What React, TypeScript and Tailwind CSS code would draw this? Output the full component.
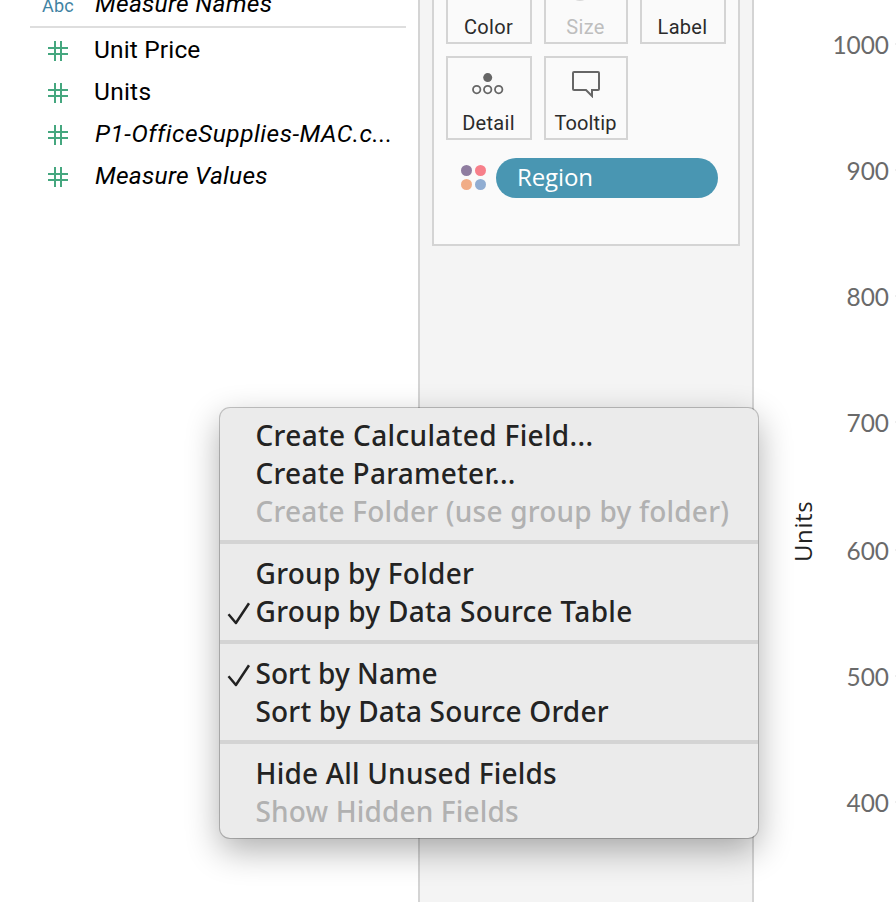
import React from "react";
import { clsx } from "clsx";

const measures = [
  { name: "Unit Price", italic: false, tracking: "tracking-[0.15px]" },
  { name: "Units", italic: false, tracking: "tracking-[0.25px]" },
  { name: "P1-OfficeSupplies-MAC.c...", italic: true, tracking: "tracking-[0.5px]" },
  { name: "Measure Values", italic: true, tracking: "tracking-[0.25px]" },
];

type Item = { label: string; tracking: string; checked?: boolean; disabled?: boolean };

const menu: Item[][] = [
  [
    { label: "Create Calculated Field...", tracking: "tracking-[0.34px]" },
    { label: "Create Parameter...", tracking: "tracking-[0.26px]" },
    { label: "Create Folder (use group by folder)", tracking: "tracking-[0.22px]", disabled: true },
  ],
  [
    { label: "Group by Folder", tracking: "tracking-[0.27px]" },
    { label: "Group by Data Source Table", tracking: "tracking-[0.3px]", checked: true },
  ],
  [
    { label: "Sort by Name", tracking: "tracking-[0.05px]", checked: true },
    { label: "Sort by Data Source Order", tracking: "tracking-[0.18px]" },
  ],
  [
    { label: "Hide All Unused Fields", tracking: "tracking-[0.2px]" },
    { label: "Show Hidden Fields", tracking: "tracking-[0.15px]", disabled: true },
  ],
];

const ticks = [1000, 900, 800, 700, 600, 500, 400];

function HashIcon() {
  return (
    <svg width="20" height="20" viewBox="0 0 20 20" className="shrink-0" shapeRendering="crispEdges">
      <path d="M7 0v20M13 0v20M0 7h20M0 13h20" stroke="#45a77f" strokeWidth="2" />
    </svg>
  );
}

function Check() {
  return (
    <svg width="24" height="24" viewBox="0 0 24 24" fill="none">
      <path d="M1.5 12.2 8.9 21 22 1.2" stroke="#222" strokeWidth="2.5" strokeLinejoin="round" />
    </svg>
  );
}

type CardProps = { label: string; width: string; tracking?: string; disabled?: boolean; children?: React.ReactNode };

function Card({ label, width, tracking = "tracking-[0.3px]", disabled, children }: CardProps) {
  return (
    <div
      className={clsx(
        "flex h-[84px] flex-col items-center justify-between border-2 border-[#d4d4d4] text-[20px]",
        width,
        disabled ? "text-[#bebebe]" : "text-[#2b2b2b]",
      )}
    >
      <div className="flex h-[50px] items-center pt-0.5">{children}</div>
      <div className={clsx("h-[30px] pr-px leading-[30px]", tracking)}>{label}</div>
    </div>
  );
}

function DataPane() {
  return (
    <div className="w-[418px] shrink-0 text-[24.5px] text-black">
      <div className="-mt-[17px] flex h-[42px]">
        <span className="w-[95px] pl-[42px] text-[18px] leading-[45px] tracking-[0.2px] text-[#3f83a3]">Abc</span>
        <span className="leading-[42px] tracking-[0.27px] italic">Measure Names</span>
      </div>
      <div className="mt-px ml-[30px] h-0.5 w-[376px] bg-[#dedede]" />
      <div className="mt-px">
        {measures.map((m) => (
          <div key={m.name} className="flex h-[42px] items-center">
            <div className="w-[94px] pt-px pl-12">
              <HashIcon />
            </div>
            <span className={clsx("leading-[42px] whitespace-nowrap", m.tracking, m.italic && "pl-px italic")}>{m.name}</span>
          </div>
        ))}
      </div>
    </div>
  );
}

function MarksPane() {
  return (
    <div className="w-[336px] shrink-0 border-x-2 border-[#d4d4d4] bg-[#f4f4f4] px-3">
      <div className="h-[246px] w-[308px] overflow-hidden border-2 border-t-0 border-[#d4d4d4] bg-[#fafafa] px-3">
        <div className="-mt-10 flex gap-3">
          <Card label="Color" width="w-[86px]" />
          <Card label="Size" width="w-[84px]" disabled>
            <div className="mt-1.5 mr-3 h-5 w-5 rounded-full border-2 border-[#d8d8d8]" />
          </Card>
          <Card label="Label" width="w-[86px]" />
        </div>
        <div className="mt-3 flex gap-3">
          <Card label="Detail" width="w-[86px]">
            <svg width="32" height="22" viewBox="0 0 32 22" fill="none" stroke="#666" strokeWidth="1.8" className="mr-0.5">
              <circle cx="15.7" cy="4.6" r="4.5" fill="#666" stroke="none" />
              <circle cx="4.7" cy="16.6" r="3.7" />
              <circle cx="15.7" cy="16.6" r="3.7" />
              <circle cx="26.7" cy="16.6" r="3.7" />
            </svg>
          </Card>
          <Card label="Tooltip" width="w-[84px]" tracking="tracking-[0.1px]">
            <svg width="28" height="27" viewBox="0 0 28 27" fill="none">
              <path d="M2 1H26Q27 1 27 2V18Q27 19 26 19H20V25L14 19H2Q1 19 1 18V2Q1 1 2 1Z" stroke="#666" strokeWidth="2" />
            </svg>
          </Card>
        </div>
        <div className="mt-[18px] flex items-center pl-[15px]">
          <div className="mb-px grid grid-cols-2 gap-[3px]">
            <i className="h-[11px] w-[11px] rounded-full bg-[#8f7da0]" />
            <i className="h-[11px] w-[11px] rounded-full bg-[#f77f8a]" />
            <i className="h-[11px] w-[11px] rounded-full bg-[#f1ad87]" />
            <i className="h-[11px] w-[11px] rounded-full bg-[#90add2]" />
          </div>
          <div className="ml-[10px] h-10 w-[222px] rounded-full bg-[#4996b2] pl-[21px] font-['Open_Sans',sans-serif] text-[24px] leading-[37px] tracking-[-0.1px] text-white">
            Region
          </div>
        </div>
      </div>
    </div>
  );
}

function Axis() {
  return (
    <div className="flex flex-1 overflow-hidden">
      <div className="flex w-[72px] justify-end pt-[498px] pr-2">
        <span className="h-[64px] rotate-180 font-['Open_Sans',sans-serif] text-[24px] leading-[30px] tracking-[0.6px] text-[#222] [writing-mode:vertical-rl]">
          Units
        </span>
      </div>
      <div className="-mt-[17px] flex-1 font-[Lato,sans-serif] text-[24.4px] text-[#6a6a6a]">
        {ticks.map((t) => (
          <div key={t} className={clsx("flex h-[126px] items-center justify-end", t === 600 && "mt-0.5")}>
            <span className="mr-1.5 mb-px">{t}</span>
            <i className="mb-1 h-0.5 w-px bg-[#eee]" />
          </div>
        ))}
      </div>
    </div>
  );
}

function ContextMenu() {
  return (
    <div className="absolute top-[408px] left-[220px] h-[430px] w-[538px] rounded-[10px] bg-[#ebebeb] pt-[10px] font-['Noto_Sans',sans-serif] text-[28px] font-medium shadow-[0_0_0_1px_rgba(0,0,0,0.22),0_12px_34px_rgba(0,0,0,0.32)]">
      {menu.map((group, i) => (
        <div key={i} className={clsx(i > 0 && "mt-2 border-t-4 border-[#d4d4d4] pt-3")}>
          {group.map((item) => (
            <div key={item.label} className={clsx("flex h-[38px]", item.disabled ? "text-[#b1b1b1]" : "text-[#232323]")}>
              <span className="w-[35.5px] shrink-0 pt-2 pl-[7px]">{item.checked && <Check />}</span>
              <span className={clsx("leading-[34px] whitespace-nowrap", item.tracking)}>{item.label}</span>
            </div>
          ))}
        </div>
      ))}
    </div>
  );
}

export default function App() {
  return (
    <div className="relative flex h-[902px] w-[896px] overflow-hidden bg-white font-[Roboto,sans-serif]">
      <DataPane />
      <MarksPane />
      <Axis />
      <ContextMenu />
    </div>
  );
}
